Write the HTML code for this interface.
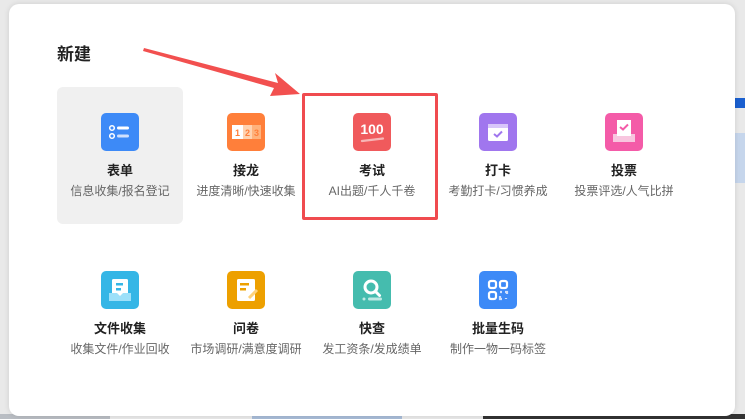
<!DOCTYPE html>
<html><head><meta charset="utf-8"><style>
body{margin:0;width:745px;height:419px;overflow:hidden;background:#e9e9e9;font-family:"Liberation Sans","Noto Sans CJK SC",sans-serif;position:relative}
.card{position:absolute;left:9px;top:4px;width:726px;height:412px;background:#fff;border-radius:10px;box-shadow:0 0 6px rgba(0,0,0,.12)}
.h{position:absolute;left:57px;top:40px;font-size:17px;font-weight:bold;color:#222}
.cell{position:absolute;width:126px;text-align:center}
.ic{width:38px;height:38px;border-radius:5px;margin:0 auto;position:relative;overflow:hidden}
.t{font-size:13px;font-weight:bold;color:#222;margin-top:12px;line-height:16px}
.s{font-size:12px;color:#666;margin-top:4px;line-height:16px;white-space:nowrap}
</style></head><body>
<div style="position:absolute;left:735px;top:98px;width:10px;height:10px;background:#1a5fcf"></div>
<div style="position:absolute;left:735px;top:133px;width:10px;height:50px;background:#c6d6ec"></div>
<div style="position:absolute;left:0;top:414px;width:110px;height:5px;background:#b9bdc3"></div>
<div style="position:absolute;left:252px;top:414px;width:150px;height:5px;background:#a8bcd8"></div>
<div style="position:absolute;left:483px;top:414px;width:262px;height:5px;background:#333"></div>
<div class="card"></div>
<div class="h">新建</div>
<div style="position:absolute;left:57px;top:87px;width:126px;height:137px;background:#f0f0f0;border-radius:6px"></div>
<div style="position:absolute;left:302px;top:93px;width:130px;height:121px;border:3px solid #f04b4f;border-radius:2px"></div>
<svg style="position:absolute;left:0;top:0" width="745" height="419"><polygon points="144,48 278,83 275,73 300,94 270,96 274,88 143,51" fill="#f2504f"/></svg>

<div class="cell" style="left:57px;top:113px"><div class="ic" style="background:#3d8af7"><svg width="38" height="38"><circle cx="11" cy="15" r="2.3" fill="none" stroke="#fff" stroke-width="1.5"/><circle cx="11" cy="23" r="2.3" fill="none" stroke="#fff" stroke-width="1.5"/><rect x="16" y="13.5" width="12" height="3" rx="1.5" fill="#fff"/><rect x="16" y="21.5" width="12" height="3" rx="1.5" fill="#cfe0fd"/></svg></div><div class="t">表单</div><div class="s">信息收集/报名登记</div></div>
<div class="cell" style="left:183px;top:113px"><div class="ic" style="background:#ff7f3a"><svg width="38" height="38"><rect x="5" y="12" width="11" height="14" fill="#fff"/><rect x="16" y="12" width="9" height="14" fill="#ffd2b0"/><rect x="25" y="12" width="9" height="14" fill="#ffb27c"/><text x="10.5" y="23" font-size="9" font-weight="bold" fill="#ff7f3a" text-anchor="middle" font-family="Liberation Sans">1</text><text x="20.5" y="23" font-size="9" font-weight="bold" fill="#ff7f3a" text-anchor="middle" font-family="Liberation Sans">2</text><text x="29.5" y="23" font-size="9" font-weight="bold" fill="#ff7f3a" text-anchor="middle" font-family="Liberation Sans">3</text></svg></div><div class="t">接龙</div><div class="s">进度清晰/快速收集</div></div>
<div class="cell" style="left:309px;top:113px"><div class="ic" style="background:#f05a5c"><svg width="38" height="38"><text x="19" y="21" font-size="14" font-weight="bold" fill="#fff" text-anchor="middle" font-family="Liberation Sans">100</text><path d="M9 28L30 25.5" stroke="#f7b6b6" stroke-width="2.2" stroke-linecap="round"/></svg></div><div class="t">考试</div><div class="s">AI出题/千人千卷</div></div>
<div class="cell" style="left:435px;top:113px"><div class="ic" style="background:#a076ee"><svg width="38" height="38"><rect x="9" y="11" width="20" height="17" rx="1.5" fill="#fff"/><rect x="9" y="11" width="20" height="4" fill="#d8c6fa"/><path d="M15 21l3 2.5 5-5" stroke="#a076ee" stroke-width="2" fill="none"/></svg></div><div class="t">打卡</div><div class="s">考勤打卡/习惯养成</div></div>
<div class="cell" style="left:561px;top:113px"><div class="ic" style="background:#f45ba8"><svg width="38" height="38"><rect x="8" y="21" width="22" height="8" fill="#f8c6df"/><rect x="12" y="7" width="14" height="16" fill="#fff"/><path d="M15 14l3 2.5 5-5" stroke="#f45ba8" stroke-width="2" fill="none"/></svg></div><div class="t">投票</div><div class="s">投票评选/人气比拼</div></div>

<div class="cell" style="left:57px;top:271px"><div class="ic" style="background:#35b6e6"><svg width="38" height="38"><rect x="11" y="8" width="16" height="17" rx="1.5" fill="#fff"/><rect x="15" y="12" width="7" height="2.5" fill="#35b6e6"/><rect x="15" y="17" width="5" height="2.5" fill="#35b6e6"/><path d="M8 22h8l3 3 3-3h8v8H8z" fill="#9de0f9"/></svg></div><div class="t">文件收集</div><div class="s">收集文件/作业回收</div></div>
<div class="cell" style="left:183px;top:271px"><div class="ic" style="background:#eda000"><svg width="38" height="38"><rect x="10" y="8" width="18" height="22" rx="1.5" fill="#fff"/><rect x="13" y="12" width="9" height="2.5" fill="#eda000"/><rect x="13" y="17" width="6" height="2.5" fill="#eda000"/><path d="M22 27l8-8" stroke="#ffd27a" stroke-width="3"/></svg></div><div class="t">问卷</div><div class="s">市场调研/满意度调研</div></div>
<div class="cell" style="left:309px;top:271px"><div class="ic" style="background:#45bcae"><svg width="38" height="38"><circle cx="18" cy="16" r="6" fill="none" stroke="#fff" stroke-width="3"/><path d="M22.5 20.5l4 4" stroke="#fff" stroke-width="3" stroke-linecap="round"/><circle cx="11" cy="28" r="1.5" fill="#bfe9e4"/><rect x="15" y="26.5" width="14" height="3" rx="1.5" fill="#bfe9e4"/></svg></div><div class="t">快查</div><div class="s">发工资条/发成绩单</div></div>
<div class="cell" style="left:435px;top:271px"><div class="ic" style="background:#3d8af7"><svg width="38" height="38" fill="none" stroke="#fff" stroke-width="2.2"><rect x="10" y="10" width="7" height="7" rx="2"/><rect x="21" y="10" width="7" height="7" rx="2"/><rect x="10" y="21" width="7" height="7" rx="2"/><path d="M21 21h2M26 21h2v2M21 25v3h2M27 27v1" stroke="#cfe0fd"/></svg></div><div class="t">批量生码</div><div class="s">制作一物一码标签</div></div>
</body></html>
